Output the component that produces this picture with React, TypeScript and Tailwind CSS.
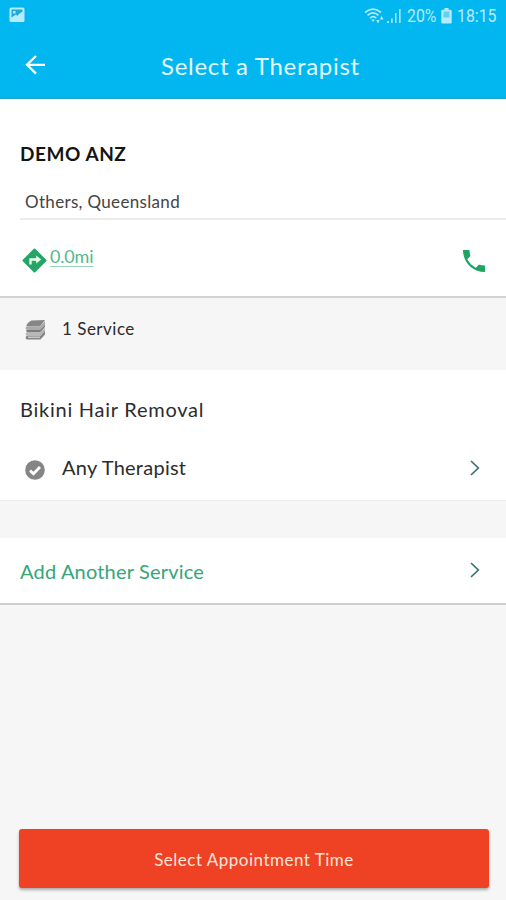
import React from "react";

function Chevron() {
  return (
    <svg width="12" height="18" viewBox="0 0 12 18" fill="none" stroke="#3d6f78" strokeWidth="1.7">
      <path d="M2 2l7.3 7L2 16" />
    </svg>
  );
}

function StatusBar() {
  return (
    <div className="flex h-8 items-center pl-[9px] pr-[9px] text-[#b5ecfb]">
      <svg className="-mt-[2px]" width="16" height="16" viewBox="0 0 16 16">
        <path fill="currentColor" d="M2 .5h12a1.500 1.500 0 011.500 1.500v11.500a1.500 1.500 0 01-1.500 1.500H2A1.500 1.500 0 01.5 13.500V2A1.500 1.500 0 012 .5z" />
        <path fill="#1fa9d6" d="M2.500 2.500h11v2l-3.500 2.500-1.500 2-1.500-1.500-4.500 3z" />
        <path fill="currentColor" d="M4 4h2.500v2.500H4z" />
      </svg>
      <div className="ml-auto flex items-center">
        <svg width="22" height="17" viewBox="0 0 22 17" fill="none" stroke="currentColor" strokeWidth="1.700">
          <path d="M1 4.500c5-4.300 11-4.300 16 0M3.500 7.300c3.500-3 7.500-3 11 0M6 10.100c2-1.700 4.500-1.700 6.200 0" />
          <path d="M7.300 11.500h3.600L9.100 14z" fill="currentColor" stroke="none" />
          <path d="M12.300 12h3.400L14 15.500zM15.800 11.500h3.800L17.700 8z" fill="currentColor" stroke="none" />
        </svg>
        <svg className="mr-[5px]" width="16" height="16" viewBox="0 0 16 16" fill="currentColor">
          <path d="M1 13h2v2H1zM5 10.500h1.800V15H5zM9 5h1.600v10H9zM13 1h1.700v14H13z" opacity=".85" />
        </svg>
        <span className="w-[30px] origin-left scale-x-[0.88] whitespace-nowrap font-['Roboto',sans-serif] text-[18px] leading-none">20%</span>
        <svg className="ml-[4px] mr-[5px]" width="11" height="16" viewBox="0 0 11 16">
          <path fill="currentColor" d="M3.500 0h4v1.700h2a1.200 1.200 0 011.200 1.200v11.300A1.300 1.300 0 019.500 15.500h-8A1.300 1.300 0 01.3 14.200V2.900a1.200 1.200 0 011.200-1.200h2z" />
          <path d="M2.500 3.500h6v6h-6z" fill="#62cff3" />
        </svg>
        <span className="w-[40px] origin-left scale-x-[0.88] whitespace-nowrap font-['Roboto',sans-serif] text-[18px] leading-none">18:15</span>
      </div>
    </div>
  );
}

export default function App() {
  return (
    <div className="flex h-[900px] w-[506px] flex-col overflow-hidden bg-[#f6f6f6] font-['Lato',sans-serif] text-[#2c2c2c]">
      <header className="h-[99px] border-b border-[#249fcb] bg-[#02b6f0]">
        <StatusBar />
        <div className="flex h-[66px] items-center">
          <svg className="ml-[25px]" width="22" height="20" viewBox="0 0 22 20" fill="none" stroke="#fff" strokeWidth="2.300">
            <path d="M20 9.800H2.500M11 1L2 9.800l9 8.800" />
          </svg>
          <h1 className="ml-[114px] whitespace-nowrap pt-[2px] text-[24px] leading-[30px] tracking-[0.7px] text-[#e5faff]">Select a Therapist</h1>
        </div>
      </header>

      <section className="h-[199px] border-b-2 border-[#d2d2d2] bg-white pl-[20px] pt-[43px]">
        <h2 className="text-[19px] font-bold leading-6 tracking-[0.55px] text-[#151515]">DEMO ANZ</h2>
        <div className="mt-[24px] h-[30px] border-b-2 border-[#ececec] pl-[5px]">
          <p className="text-[17px] leading-6 tracking-[0.33px] text-[#444]">Others, Queensland</p>
        </div>
        <div className="flex h-[82px] items-center pr-[20px]">
          <svg className="mb-[1px] ml-[2px]" width="25" height="25" viewBox="0 0 25 25">
            <path d="M12.500 1.500l11 11-11 11-11-11z" fill="#26a566" stroke="#26a566" strokeWidth="2" strokeLinejoin="round" />
            <path d="M8.500 16.500v-5h7" fill="none" stroke="#e9fff2" strokeWidth="2.300" />
            <path d="M14.200 7.500l5 4-5 4z" fill="#e9fff2" />
          </svg>
          <a className="mb-[10px] ml-[3px] text-[18px] leading-6 tracking-[-0.2px] text-[#55b98a] underline decoration-[#9bd3b8] underline-offset-[3px]">0.0mi</a>
          <svg className="ml-auto" width="24" height="24" viewBox="0 0 24 24" fill="#1fa463">
            <path d="M1 1h6.300c.4 2.300.5 3.500 1 5.500.1.500 0 .8-.3 1.100L5.300 10.200c2 3.700 4.800 6.500 8.500 8.500l2.700-2.700c.3-.3.700-.4 1.100-.3 1.800.5 3.300.8 5.400.9V23C10.500 23 1 13.500 1 1z" />
          </svg>
        </div>
      </section>

      <section className="flex h-[72px] items-start pl-[25px] pt-[20px]">
        <svg className="mt-[2px]" width="21" height="20" viewBox="0 0 21 20">
          <path d="M6.500.5L20 0l-5 6.500H2c-2-1 2-5 4.500-6z" fill="#868686" />
          <path d="M20 1v4l-4.500 5H3C0 10 0 7 2 6.500h13z" fill="#aaa" />
          <path d="M20 5v2l-5 5.500H2L1 10h14z" fill="#7c7c7c" />
          <path d="M20 8v4l-4.500 4H3c-3 0-3-3-1-3.700h13z" fill="#b8b8b8" />
          <path d="M20 11v3.500L15.500 19.500H3c-2.500 0-3-2-1.500-3.500h14z" fill="#868686" />
          <path d="M3 16.500h12V18H3z" fill="#c7c7c7" />
        </svg>
        <span className="ml-[16px] text-[17px] leading-[22px] tracking-[0.5px]">1 Service</span>
      </section>

      <section className="h-[131px] border-b border-[#ececec] bg-white pl-[20px] pt-[25px]">
        <h3 className="text-[20px] leading-[28px] tracking-[0.75px]">Bikini Hair Removal</h3>
        <div className="mt-[30px] flex h-[30px] items-center">
          <svg className="ml-[5px] mt-[4px]" width="20" height="20" viewBox="0 0 20 20">
            <circle cx="10" cy="10" r="9.800" fill="#858585" />
            <path d="M5 10.500l3.500 3.300L15 7" fill="none" stroke="#fff" strokeWidth="2.800" />
          </svg>
          <span className="-mt-[2px] ml-[17px] text-[20px] leading-[28px] tracking-[0.25px]">Any Therapist</span>
          <span className="ml-auto mr-[25px]"><Chevron /></span>
        </div>
      </section>

      <section className="mt-[37px] flex h-[67px] items-center border-b-2 border-[#cecece] bg-white pl-[20px] pr-[25px]">
        <span className="text-[20px] leading-[28px] tracking-[0.18px] text-[#36a579]">Add Another Service</span>
        <span className="-mt-[2px] ml-auto"><Chevron /></span>
      </section>

      <button className="mb-[12px] ml-[19px] mt-auto h-[59px] w-[470px] rounded-[3px] bg-[#ef4123] pt-[3px] text-[17px] tracking-[0.5px] text-[#ffe5dc] shadow-[0_2px_3px_#aaa]">
        Select Appointment Time
      </button>
    </div>
  );
}
